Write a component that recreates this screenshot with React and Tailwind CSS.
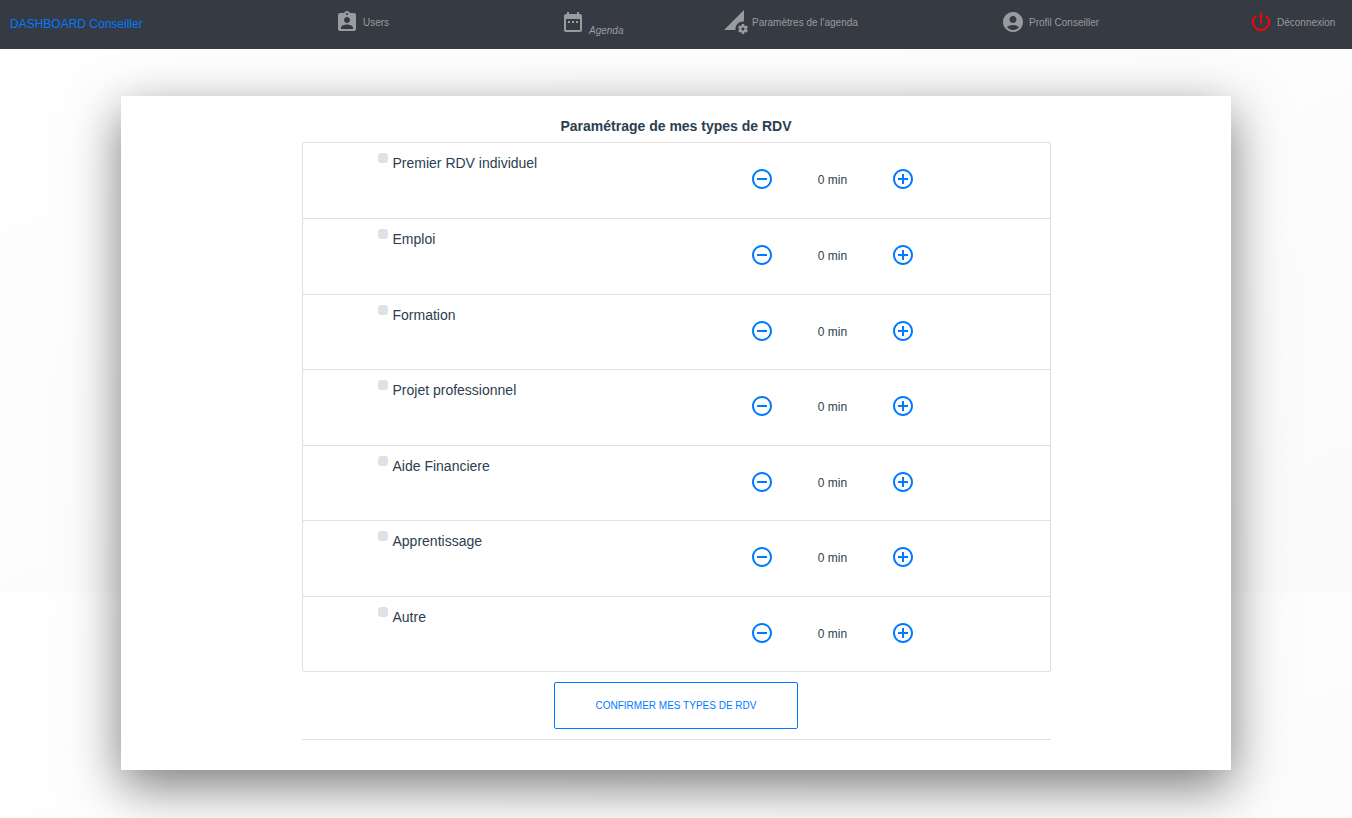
import { useState } from "react";
import {
  MdAccountCircle,
  MdAddCircleOutline,
  MdAssignmentInd,
  MdDateRange,
  MdPermDataSetting,
  MdPowerSettingsNew,
  MdRemoveCircleOutline,
} from "react-icons/md";

const TYPES = [
  "Premier RDV individuel",
  "Emploi",
  "Formation",
  "Projet professionnel",
  "Aide Financiere",
  "Apprentissage",
  "Autre",
];

const STEP = 5;

function NavItem({ icon: Icon, iconClass, children }) {
  return (
    <a href="#" className="flex items-center gap-1 whitespace-nowrap">
      <Icon className={iconClass || "size-6 shrink-0"} aria-hidden="true" />
      <span className="pt-[2px]">{children}</span>
    </a>
  );
}

function NavBar() {
  return (
    <nav className="relative z-10 grid h-[49px] grid-cols-[325fr_226fr_163fr_277fr_248fr_103fr] bg-[#363a42] pb-[5px] pl-[10px] text-[10px] leading-4 text-[#999c9f]">
      <a href="#" className="flex items-center pt-[3px] text-xs whitespace-nowrap text-[#007bff]">
        DASHBOARD Conseiller
      </a>
      <NavItem icon={MdAssignmentInd}>Users</NavItem>
      <NavItem icon={MdDateRange}>
        <i className="block pt-4">Agenda</i>
      </NavItem>
      <NavItem icon={MdPermDataSetting}>Paramètres de l'agenda</NavItem>
      <NavItem icon={MdAccountCircle}>Profil Conseiller</NavItem>
      <NavItem icon={MdPowerSettingsNew} iconClass="size-6 shrink-0 text-[#ff0000]">
        Déconnexion
      </NavItem>
    </nav>
  );
}

function TypeRow({ name }) {
  const [checked, setChecked] = useState(false);
  const [minutes, setMinutes] = useState(0);

  return (
    <li className="flex items-start justify-between border-t border-[#dfdfdf] pr-[134px] pl-[75px] first:border-t-0">
      <label className="flex items-start gap-[5px] pt-[10px]">
        <input
          type="checkbox"
          checked={checked}
          onChange={(e) => setChecked(e.target.checked)}
          className="size-[10px] shrink-0 appearance-none rounded-[3px] bg-[#dee2e6] checked:bg-[#007bff]"
        />
        <span className="text-sm">{name}</span>
      </label>
      <div className="mt-6 flex h-6 w-[166px] items-center justify-between text-[#007bff]">
        <button
          type="button"
          aria-label={`Diminuer la durée : ${name}`}
          onClick={() => setMinutes(Math.max(0, minutes - STEP))}
        >
          <MdRemoveCircleOutline className="size-6" />
        </button>
        <span className="pt-[2px] text-xs text-[#2c3e50]">{minutes} min</span>
        <button
          type="button"
          aria-label={`Augmenter la durée : ${name}`}
          onClick={() => setMinutes(minutes + STEP)}
        >
          <MdAddCircleOutline className="size-6" />
        </button>
      </div>
    </li>
  );
}

export default function App() {
  return (
    <div className="flex min-h-screen flex-col bg-[linear-gradient(160deg,#ffffff,#fafafa)] bg-[length:100%_593px] font-['Liberation_Sans',Arial,sans-serif] text-[#2c3e50]">
      <NavBar />
      <main className="px-4 pt-[47px] pb-12">
        <section className="mx-auto max-w-[1110px] bg-white pt-5 pb-[30px] shadow-[0_16px_48px_rgba(0,0,0,0.52)]">
          <div className="mx-auto max-w-[749px] border-b border-[#dfdfdf] pb-[10px]">
            <h1 className="pb-[6px] text-center text-sm font-bold">Paramétrage de mes types de RDV</h1>
            <ul className="grid min-h-[530px] auto-rows-fr rounded-[2px] border border-[#dfdfdf]">
              {TYPES.map((name) => (
                <TypeRow key={name} name={name} />
              ))}
            </ul>
            <button
              type="button"
              className="mx-auto mt-[10px] block rounded-[2px] border border-[#007bff] px-[41px] py-[15px] text-[10px] leading-[15px] text-[#007bff] uppercase"
            >
              Confirmer mes types de RDV
            </button>
          </div>
        </section>
      </main>
    </div>
  );
}
